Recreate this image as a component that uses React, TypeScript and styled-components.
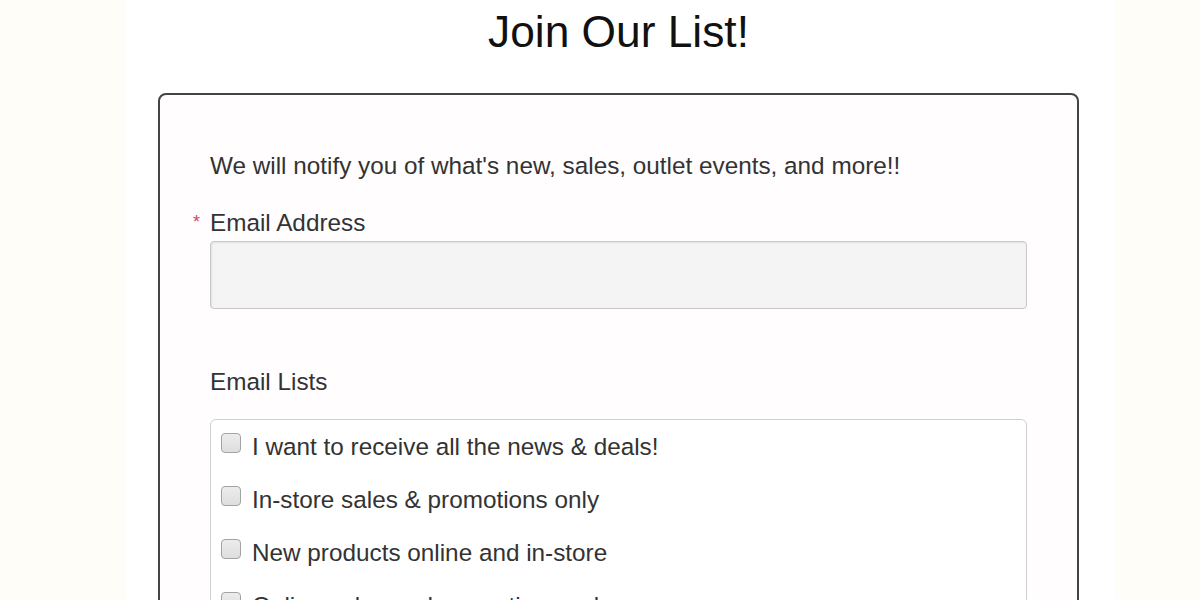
import * as React from 'react';
import styled, { createGlobalStyle } from 'styled-components';

const GlobalStyle = createGlobalStyle`
  html, body {
    margin: 0;
    padding: 0;
    background: #fffdf8;
    overflow: hidden;
  }
  body {
    font-family: "Liberation Sans", Arial, sans-serif;
  }
`;

const Column = styled.div`
  width: 989px;
  min-height: 100vh;
  margin-left: 126px;
  background: #ffffff;
`;

const Title = styled.h1`
  margin: 0;
  padding: 6px 4px 0 0;
  font-size: 44.3px;
  line-height: 52px;
  font-weight: 400;
  color: #111;
  text-align: center;
`;

const Card = styled.div`
  margin: 35px 0 0 32px;
  width: 921px;
  border: 2px solid #444;
  border-radius: 8px;
  padding: 56px 50px 40px;
  box-sizing: border-box;
  background: #fffdfe;
`;

const Text = styled.p`
  margin: 0;
  font-size: 24.3px;
  line-height: 30px;
  color: #333;
`;

const Label = styled.label<{ $required?: boolean; $gap: number }>`
  display: flex;
  align-items: baseline;
  margin-top: ${(p) => p.$gap}px;
  margin-left: ${(p) => (p.$required ? -17 : 0)}px;
  font-size: 24.3px;
  line-height: 30px;
  color: #333;
`;

const Star = styled.span`
  width: 17px;
  font-size: 18px;
  color: #d6426a;
  position: relative;
  top: -3px;
`;

const Input = styled.input`
  display: block;
  width: 100%;
  height: 68px;
  margin-top: 1px;
  box-sizing: border-box;
  border: 1px solid #c8c8c8;
  border-radius: 4px;
  background: #f5f4f4;
  box-shadow: inset 1px 1px 2px rgba(0, 0, 0, 0.08);
  font-family: inherit;
  font-size: 22px;
  outline: none;
`;

const ListBox = styled.div`
  margin-top: 22px;
  border: 1px solid #d0d0d0;
  border-radius: 6px;
  padding: 12px 10px 20px;
  display: flex;
  flex-direction: column;
  gap: 23px;
  background: #fff;
`;

const Option = styled.label`
  display: flex;
  align-items: flex-start;
  gap: 11px;
  font-size: 24.3px;
  line-height: 30px;
  color: #333;
`;

const Check = styled.input`
  appearance: none;
  margin: 1px 0 0;
  width: 20px;
  height: 20px;
  flex: none;
  box-sizing: border-box;
  border: 1px solid #a3a3a3;
  border-radius: 4px;
  background: linear-gradient(#ececec, #dedede);
`;

const lists = [
  'I want to receive all the news & deals!',
  'In-store sales & promotions only',
  'New products online and in-store',
  'Online sales and promotions only',
];

export default function App() {
  return (
    <>
      <GlobalStyle />
      <Column>
        <Title>Join Our List!</Title>
        <Card>
          <Text>We will notify you of what's new, sales, outlet events, and more!!</Text>
          <Label $required $gap={27}>
            <Star>*</Star>Email Address
          </Label>
          <Input type="email" />
          <Label $gap={58}>Email Lists</Label>
          <ListBox>
            {lists.map((item) => (
              <Option key={item}>
                <Check type="checkbox" />
                {item}
              </Option>
            ))}
          </ListBox>
        </Card>
      </Column>
    </>
  );
}
